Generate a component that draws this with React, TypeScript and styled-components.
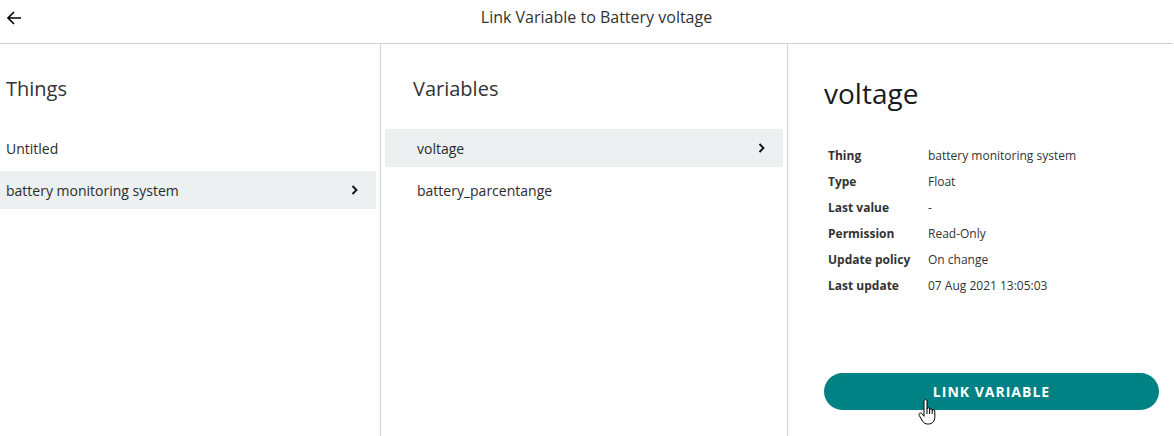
import React from 'react';
import styled, { createGlobalStyle } from 'styled-components';

const GlobalStyle = createGlobalStyle`
  html, body {
    margin: 0;
    padding: 0;
    background: #ffffff;
  }
  body {
    font-family: 'Open Sans', 'Noto Sans', Arial, sans-serif;
    color: #2b2b2b;
  }
`;

const Page = styled.div`
  width: 1174px;
  height: 436px;
  display: flex;
  flex-direction: column;
  overflow: hidden;
  background: #fff;
`;

const Header = styled.header`
  height: 43px;
  flex: none;
  display: flex;
  align-items: center;
  justify-content: center;
  position: relative;
  padding-left: 20px;
  border-bottom: 1px solid #cfd3d4;
  margin-right: 1px;
`;

const BackButton = styled.button`
  position: absolute;
  left: 4px;
  top: 8px;
  width: 20px;
  height: 20px;
  padding: 0;
  border: 0;
  background: none;
  display: flex;
  align-items: center;
  justify-content: center;
  color: #000;
  cursor: pointer;
`;

const HeaderTitle = styled.h1`
  margin: 0 0 10px;
  font-size: 16px;
  font-weight: 400;
  color: #333;
`;

const Columns = styled.div`
  flex: 1;
  display: grid;
  grid-template-columns: 381px 407px 1fr;
`;

const Column = styled.section<{ $padLeft: number }>`
  display: flex;
  flex-direction: column;
  padding: 0 4px 0 ${p => p.$padLeft}px;
  border-right: 1px solid #cfd3d4;
`;

const ColumnTitle = styled.h2<{ $inset: number }>`
  margin: 0;
  padding: 31px 0 26px ${p => p.$inset}px;
  font-size: 20px;
  line-height: 28px;
  font-weight: 400;
  color: #333;
`;

const List = styled.ul`
  list-style: none;
  margin: 0;
  padding: 0;
  display: flex;
  flex-direction: column;
  gap: 4px;
`;

const Row = styled.li<{ $active?: boolean; $inset: number }>`
  height: 38px;
  display: flex;
  align-items: center;
  justify-content: space-between;
  padding: 0 17px 0 ${p => p.$inset}px;
  font-size: 14px;
  color: #2b2b2b;
  background: ${p => (p.$active ? '#ecf0f1' : 'transparent')};
`;

const Detail = styled.section`
  display: flex;
  flex-direction: column;
  padding: 0 15px 0 36px;
`;

const DetailTitle = styled.h2`
  margin: 0;
  padding: 30px 0 30px;
  font-size: 28px;
  line-height: 38px;
  font-weight: 400;
  color: #1a1a1a;
`;

const Props = styled.dl`
  display: grid;
  grid-template-columns: 100px 1fr;
  grid-auto-rows: 26px;
  align-items: center;
  margin: 0 0 0 4px;
  font-size: 12px;
`;

const PropName = styled.dt`
  font-weight: 700;
  color: #333;
`;

const PropValue = styled.dd`
  margin: 0;
  color: #333;
`;

const LinkButton = styled.button`
  position: relative;
  margin-top: 75px;
  height: 37px;
  border: 0;
  border-radius: 19px;
  background: #008184;
  color: #fff;
  font-family: 'Open Sans', 'Noto Sans', Arial, sans-serif;
  font-size: 14px;
  font-weight: 700;
  letter-spacing: 1px;
  cursor: pointer;
`;

const Pointer = styled.svg`
  position: absolute;
  left: 94px;
  top: 26px;
  pointer-events: none;
`;

const Chevron = () => (
  <svg width="9" height="12" viewBox="0 0 9 12">
    <path d="M2.5 2 L6.5 6 L2.5 10" fill="none" stroke="#111" strokeWidth="1.9" />
  </svg>
);

const things = [
  { name: 'Untitled', active: false },
  { name: 'battery monitoring system', active: true },
];

const variables = [
  { name: 'voltage', active: true },
  { name: 'battery_parcentange', active: false },
];

const details: [string, string][] = [
  ['Thing', 'battery monitoring system'],
  ['Type', 'Float'],
  ['Last value', '-'],
  ['Permission', 'Read-Only'],
  ['Update policy', 'On change'],
  ['Last update', '07 Aug 2021 13:05:03'],
];

export default function App() {
  return (
    <>
      <GlobalStyle />
      <Page>
        <Header>
          <BackButton aria-label="Back">
            <svg width="16" height="16" viewBox="0 0 16 16">
              <path d="M15 8 H2 M8 2 L2 8 L8 14" fill="none" stroke="#000" strokeWidth="1.6" />
            </svg>
          </BackButton>
          <HeaderTitle>Link Variable to Battery voltage</HeaderTitle>
        </Header>

        <Columns>
          <Column $padLeft={0}>
            <ColumnTitle $inset={6}>Things</ColumnTitle>
            <List>
              {things.map(t => (
                <Row key={t.name} $active={t.active} $inset={6}>
                  {t.name}
                  {t.active && <Chevron />}
                </Row>
              ))}
            </List>
          </Column>

          <Column $padLeft={4}>
            <ColumnTitle $inset={28}>Variables</ColumnTitle>
            <List>
              {variables.map(v => (
                <Row key={v.name} $active={v.active} $inset={32}>
                  {v.name}
                  {v.active && <Chevron />}
                </Row>
              ))}
            </List>
          </Column>

          <Detail>
            <DetailTitle>voltage</DetailTitle>
            <Props>
              {details.map(([k, v]) => (
                <React.Fragment key={k}>
                  <PropName>{k}</PropName>
                  <PropValue>{v}</PropValue>
                </React.Fragment>
              ))}
            </Props>
            <LinkButton>
              LINK VARIABLE
              <Pointer width="20" height="27" viewBox="0 0 20 27">
                <path
                  d="M6 2.2c0-1 .7-1.6 1.5-1.6S9 1.2 9 2.2V10c0-.8.6-1.3 1.3-1.3s1.3.5 1.3 1.3v1c0-.8.6-1.3 1.3-1.3s1.3.5 1.3 1.3v1c0-.8.6-1.3 1.3-1.3s1.3.5 1.3 1.3v6.5c0 3.6-2.6 6.5-6.2 6.5h-1c-2.2 0-3.7-1-5-2.7L1.3 16.6c-.6-.9-.4-1.9.4-2.4.8-.5 1.8-.2 2.4.6L6 17.3z"
                  fill="#fff"
                  stroke="#000"
                  strokeWidth="1"
                  strokeLinejoin="round"
                />
                <path d="M9 10v5M11.6 11v4M14.2 12v3" stroke="#000" strokeWidth="1" />
              </Pointer>
            </LinkButton>
          </Detail>
        </Columns>
      </Page>
    </>
  );
}
